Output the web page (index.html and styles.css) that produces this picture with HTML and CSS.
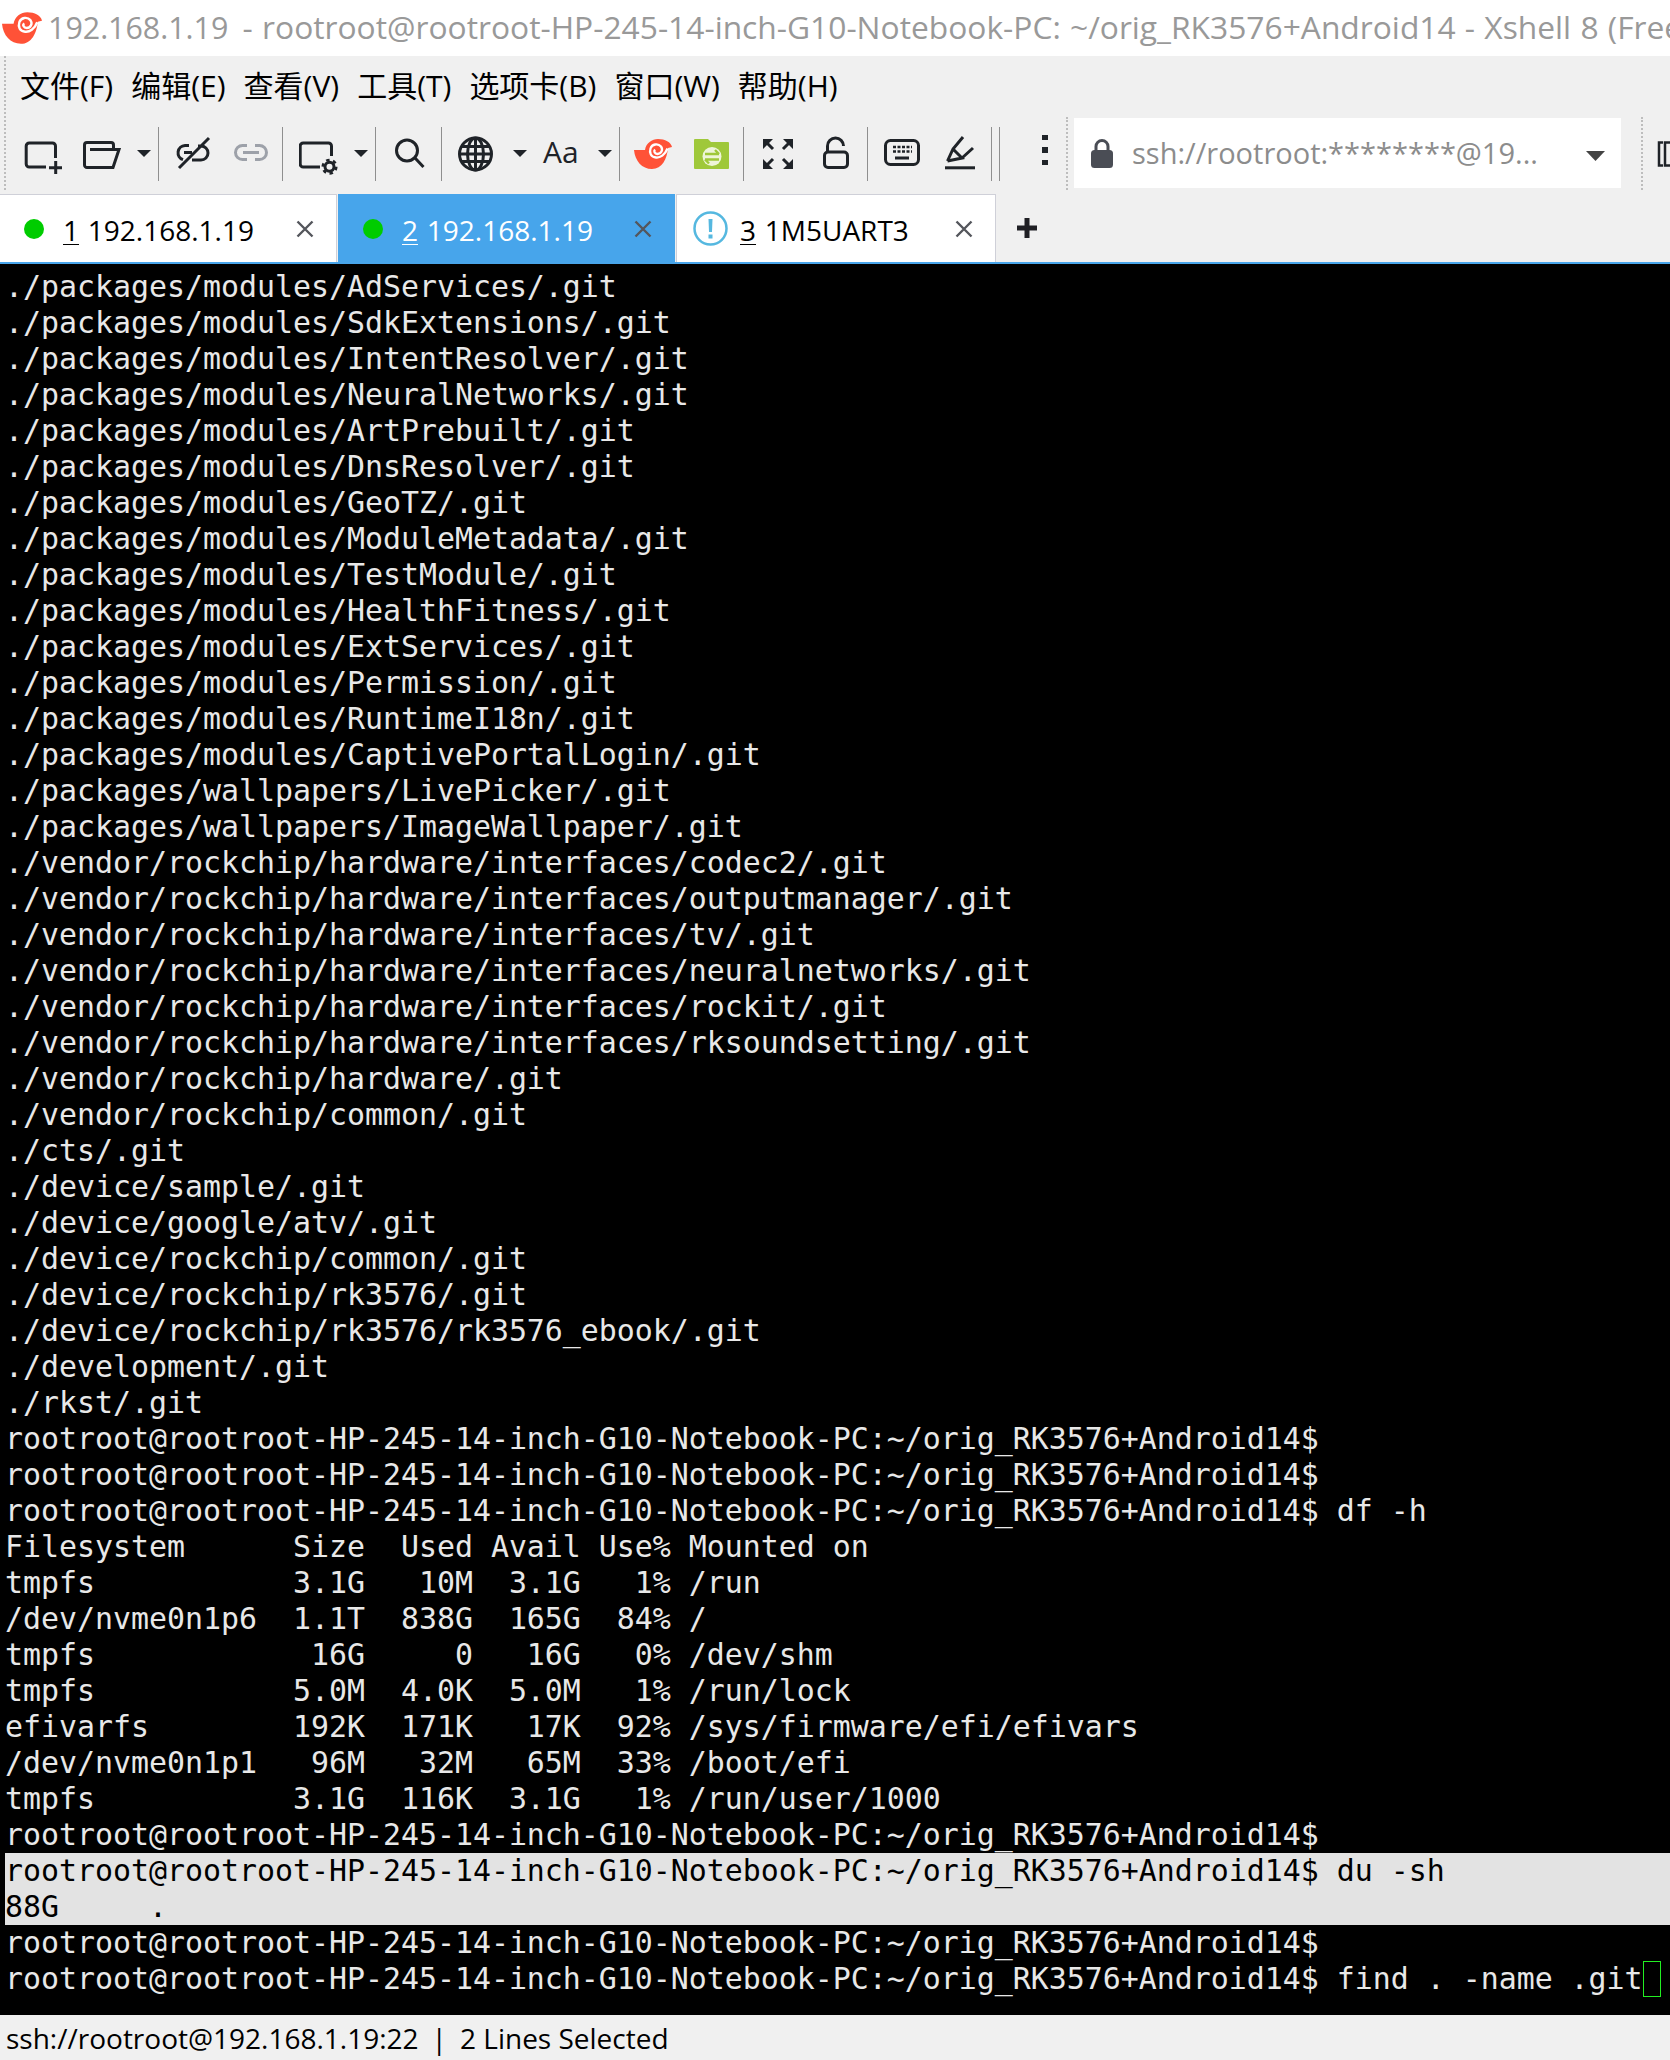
FILE: index.html
```html
<!DOCTYPE html>
<html lang="zh">
<head>
<meta charset="utf-8">
<title>Xshell 8</title>
<link rel="stylesheet" href="styles.css">
</head>
<body>
<svg class="defs" width="0" height="0">
  <symbol id="shell" viewBox="0 0 38 30">
    <path fill="#ff5237" d="M0 11H11C12 4 18 0 24 0 31 0 37 3 38 8L34 9C33 20 28 30 18 30 8 30 1 22 0 11Z"/>
    <path fill="none" stroke="#fff" stroke-width="2.300" d="M33.500 9.500C31 16 26 19 22 18.500 17 18 15 14 16.500 9.500 18 5 24 4 27 7.500 29.500 11 27 15 23.500 15 20.500 15 19.500 12 21 10.500"/>
  </symbol>
  <symbol id="caret" viewBox="0 0 14 54">
    <path fill="#1f2328" d="M0 23H14L7 30Z"/>
  </symbol>
  <symbol id="x" viewBox="0 0 18 18">
    <path fill="none" stroke="#54565c" stroke-width="2.400" d="M1.500 1.500 16.500 16.500M16.500 1.500 1.500 16.500"/>
  </symbol>
</svg>
<div class="window">
  <header class="titlebar">
    <svg class="title-logo"><use href="#shell"/></svg>
    <span class="title-text"><span class="title-ip">192.168.1.19</span> - rootroot@rootroot-HP-245-14-inch-G10-Notebook-PC: ~/orig_RK3576+Android14 - Xshell 8 (Free</span>
  </header>
  <div class="bars">
    <nav class="menubar">
      <span>文件(F)</span><span>编辑(E)</span><span>查看(V)</span><span>工具(T)</span><span>选项卡(B)</span><span>窗口(W)</span><span>帮助(H)</span>
    </nav>
    <div class="toolbar">
      <svg class="ico t-new" viewBox="0 0 39 54"><path d="M31.500 31V19a3 3 0 0 0-3-3H5.200a3 3 0 0 0-3 3v18a3 3 0 0 0 3 3H22M31.700 34v13M25 40.800h13"/></svg>
      <svg class="ico t-open" viewBox="0 0 39 54"><path d="M8 22.500h29l-6 18H5a2.500 2.500 0 0 1-2.500-2.500V18A2.500 2.500 0 0 1 5 15.500h24a2.500 2.500 0 0 1 2.500 2.500v3"/></svg>
      <svg class="caret c-open"><use href="#caret"/></svg>
      <i class="sep s-1"></i>
      <svg class="ico t-linkoff" viewBox="0 0 37 54"><path d="M14 18.500h-4a7.300 7.300 0 0 0-2 14.200M23 19h3a7 7 0 0 1 0 14H17M9 25.500h8M34 11 4 41"/></svg>
      <svg class="ico grey t-link" viewBox="0 0 36 54"><path d="M14 18.500H9.500a7 7 0 0 0 0 14H14M22 18.500h4.500a7 7 0 0 1 0 14H22M10 25.500h16"/></svg>
      <i class="sep s-2"></i>
      <svg class="ico t-gear" viewBox="0 0 40 54">
        <path d="M32.500 29V19a3 3 0 0 0-3-3H4.200a3 3 0 0 0-3 3v18a3 3 0 0 0 3 3H21"/>
        <circle cx="30.500" cy="39.700" r="4.500"/>
        <circle class="teeth" cx="30.500" cy="39.700" r="6.800"/>
      </svg>
      <svg class="caret c-gear"><use href="#caret"/></svg>
      <i class="sep s-3"></i>
      <svg class="ico t-search" viewBox="0 0 30 54"><circle cx="12" cy="23.500" r="10.500"/><path d="M20 31 28.500 40"/></svg>
      <i class="sep s-4"></i>
      <svg class="ico t-globe" viewBox="0 0 36 54">
        <circle cx="17.500" cy="27" r="16"/>
        <ellipse cx="17.500" cy="27" rx="8" ry="16"/>
        <path d="M17.500 11V43M1.500 27H33.500M4 19.500H31M4 34.500H31"/>
      </svg>
      <svg class="caret c-globe"><use href="#caret"/></svg>
      <span class="aa">Aa</span>
      <svg class="caret c-aa"><use href="#caret"/></svg>
      <i class="sep s-5"></i>
      <svg class="t-shell" viewBox="0 0 38 54"><use href="#shell" x="0" y="12" width="38" height="30"/></svg>
      <svg class="t-sftp" viewBox="0 0 35 54">
        <path fill="#9fc83a" d="M0 13a1 1 0 0 1 1-1h13l3 3h17a1 1 0 0 1 1 1v25a1 1 0 0 1-1 1H1a1 1 0 0 1-1-1Z"/>
        <circle cx="18" cy="29.500" r="9.500" fill="#eef5d8"/>
        <path fill="none" stroke="#9fc83a" stroke-width="2.400" d="M11 27H25M21 23l4 4M25 32.500H11M15 36.500l-4-4"/>
      </svg>
      <i class="sep s-6"></i>
      <svg class="ico t-expand" viewBox="0 0 30 54">
        <path class="solid" d="M0 12h10L0 22ZM30 12H20L30 22ZM0 42H10L0 32ZM30 42H20L30 32Z"/>
        <path d="M3 15 10 22M27 15 20 22M3 39 10 32M27 39 20 32"/>
      </svg>
      <svg class="ico t-unlock" viewBox="0 0 26 54"><rect x="1.500" y="25" width="23" height="15.500" rx="3.500"/><path d="M4.500 24V19a8 8 0 0 1 16 0"/></svg>
      <i class="sep s-7"></i>
      <svg class="ico t-keys" viewBox="0 0 36 54"><rect x="1.500" y="13.500" width="33" height="24" rx="5"/><path class="thin" d="M9 20H28M9 24.500H28"/><path d="M11 31H25"/></svg>
      <svg class="ico t-pen" viewBox="0 0 31 54"><path d="M0 40.800H30"/><path d="M2.500 34 8 22 18 10M8 22 17 31 2.500 34M17 31 28 21"/></svg>
      <i class="sep s-8"></i>
      <i class="sep s-9"></i>
      <svg class="t-dots" viewBox="0 0 6 54"><path fill="#1f2328" d="M0 8H6V13H0ZM0 20H6V26H0ZM0 33H6V38H0Z"/></svg>
      <i class="grip g-1"></i>
      <div class="address">
        <svg class="addr-lock" viewBox="0 0 24 30"><path fill="none" stroke="#4a4d55" stroke-width="3" d="M6 14V8.500a6 6 0 0 1 12 0V14"/><rect x="1" y="12" width="22" height="18" rx="3.500" fill="#4a4d55"/></svg>
        <span class="addr-text">ssh://rootroot:********@19...</span>
        <svg class="addr-caret" viewBox="0 0 19 10"><path fill="#444" d="M0 0H19L9.500 10Z"/></svg>
      </div>
      <i class="grip g-2"></i>
      <svg class="t-bracket" viewBox="0 0 13 54"><path fill="none" stroke="#1f2328" stroke-width="2.500" d="M6 15.500H2V38.500H6M13 15.500H8V38.500H13"/></svg>
    </div>
  </div>
  <div class="tabbar">
    <div class="tab t1">
      <i class="dot"></i>
      <span class="tab-label"><u>1</u> 192.168.1.19</span>
      <svg class="tab-x"><use href="#x"/></svg>
    </div>
    <div class="tab t2 active">
      <i class="dot"></i>
      <span class="tab-label"><u>2</u> 192.168.1.19</span>
      <svg class="tab-x"><use href="#x"/></svg>
    </div>
    <div class="tab t3">
      <svg class="alert" viewBox="0 0 35 35"><circle cx="17.500" cy="17.500" r="16" fill="none" stroke="#55b8e0" stroke-width="2.500"/><path fill="#55b8e0" d="M15.500 8H19.500L19 21H16ZM15.500 23.500H19.500V27.500H15.500Z"/></svg>
      <span class="tab-label"><u>3</u> 1M5UART3</span>
      <svg class="tab-x"><use href="#x"/></svg>
    </div>
    <svg class="tab-add" viewBox="0 0 20 20"><path fill="none" stroke="#1f1f24" stroke-width="5" d="M10 0V20M0 10H20"/></svg>
  </div>
  <main class="terminal"><pre class="screen">./packages/modules/AdServices/.git
./packages/modules/SdkExtensions/.git
./packages/modules/IntentResolver/.git
./packages/modules/NeuralNetworks/.git
./packages/modules/ArtPrebuilt/.git
./packages/modules/DnsResolver/.git
./packages/modules/GeoTZ/.git
./packages/modules/ModuleMetadata/.git
./packages/modules/TestModule/.git
./packages/modules/HealthFitness/.git
./packages/modules/ExtServices/.git
./packages/modules/Permission/.git
./packages/modules/RuntimeI18n/.git
./packages/modules/CaptivePortalLogin/.git
./packages/wallpapers/LivePicker/.git
./packages/wallpapers/ImageWallpaper/.git
./vendor/rockchip/hardware/interfaces/codec2/.git
./vendor/rockchip/hardware/interfaces/outputmanager/.git
./vendor/rockchip/hardware/interfaces/tv/.git
./vendor/rockchip/hardware/interfaces/neuralnetworks/.git
./vendor/rockchip/hardware/interfaces/rockit/.git
./vendor/rockchip/hardware/interfaces/rksoundsetting/.git
./vendor/rockchip/hardware/.git
./vendor/rockchip/common/.git
./cts/.git
./device/sample/.git
./device/google/atv/.git
./device/rockchip/common/.git
./device/rockchip/rk3576/.git
./device/rockchip/rk3576/rk3576_ebook/.git
./development/.git
./rkst/.git
rootroot@rootroot-HP-245-14-inch-G10-Notebook-PC:~/orig_RK3576+Android14$
rootroot@rootroot-HP-245-14-inch-G10-Notebook-PC:~/orig_RK3576+Android14$
rootroot@rootroot-HP-245-14-inch-G10-Notebook-PC:~/orig_RK3576+Android14$ df -h
Filesystem      Size  Used Avail Use% Mounted on
tmpfs           3.1G   10M  3.1G   1% /run
/dev/nvme0n1p6  1.1T  838G  165G  84% /
tmpfs            16G     0   16G   0% /dev/shm
tmpfs           5.0M  4.0K  5.0M   1% /run/lock
efivarfs        192K  171K   17K  92% /sys/firmware/efi/efivars
/dev/nvme0n1p1   96M   32M   65M  33% /boot/efi
tmpfs           3.1G  116K  3.1G   1% /run/user/1000
rootroot@rootroot-HP-245-14-inch-G10-Notebook-PC:~/orig_RK3576+Android14$
<span class="selected">rootroot@rootroot-HP-245-14-inch-G10-Notebook-PC:~/orig_RK3576+Android14$ du -sh
88G     .
</span>rootroot@rootroot-HP-245-14-inch-G10-Notebook-PC:~/orig_RK3576+Android14$
rootroot@rootroot-HP-245-14-inch-G10-Notebook-PC:~/orig_RK3576+Android14$ find . -name .git<span class="cursor"> </span></pre></main>
  <footer class="statusbar"><span>ssh://rootroot@192.168.1.19:22</span><span>|</span><span>2 Lines Selected</span></footer>
</div>
</body>
</html>
```
FILE: styles.css
```css
* { box-sizing: border-box; }
html, body { margin: 0; padding: 0; background: #000; }
.defs { position: absolute; }
.window {
  width: 1670px; height: 2060px; overflow: hidden;
  display: flex; flex-direction: column;
  font-family: "Open Sans", "Noto Sans CJK SC", sans-serif;
  background: #f0f0f0;
}
svg { display: block; flex: none; }

/* title */
.titlebar { height: 56px; background: #fff; display: flex; align-items: center; padding-left: 2px; white-space: nowrap; overflow: hidden; }
.title-logo { width: 40px; height: 32px; margin-top: -1px; flex: none; }
.title-text { margin-left: 6px; font-size: 31.750px; color: #999; margin-top: -4px; word-spacing: 1px; }
.title-ip { font-size: 30.400px; margin-right: 5px; }

/* menu + toolbar */
.bars { height: 134px; margin-left: 4px; border-left: 2px dotted #bdbdbd; }
.menubar { height: 56px; display: flex; align-items: center; gap: 18px; padding-left: 14px; font-size: 30px; color: #000; }
.menubar span { line-height: 56px; margin-top: 3px; }
.toolbar { height: 78px; display: flex; align-items: flex-start; }
.toolbar > svg, .toolbar > .sep, .aa { margin-top: 15px; height: 54px; }

.ico { fill: none; stroke: #1f2328; stroke-width: 3; stroke-linecap: butt; }
.ico.grey { stroke: #9da1a9; }
.ico .solid { fill: #1f2328; stroke: none; }
.ico .thin { stroke-width: 2.500; stroke-dasharray: 3 1.500; }
.ico .teeth { stroke-width: 2.500; stroke-dasharray: 3.500 3.600; }
.sep { display: block; flex: none; width: 1px; background: #8f8f8f; }
.caret { width: 14px; }

.t-new { width: 39px; margin-left: 18px; }
.t-open { width: 39px; margin-left: 19px; }
.c-open { margin-left: 16px; }
.s-1 { margin-left: 7px; }
.t-linkoff { width: 37px; margin-left: 16px; }
.t-link { width: 36px; margin-left: 21px; }
.s-2 { margin-left: 13px; }
.t-gear { width: 40px; margin-left: 16px; }
.c-gear { margin-left: 15px; }
.s-3 { margin-left: 7px; }
.t-search { width: 30px; margin-left: 19px; }
.s-4 { margin-left: 16px; }
.t-globe { width: 36px; margin-left: 16px; }
.c-globe { margin-left: 19px; }
.aa { width: 36px; margin-left: 16px; font-size: 30px; line-height: 50px; color: #1f2328; flex: none; }
.c-aa { margin-left: 19px; }
.s-5 { margin-left: 7px; }
.t-shell { width: 38px; margin-left: 14px; }
.t-sftp { width: 35px; margin-left: 22px; }
.s-6 { margin-left: 14px; }
.t-expand { width: 30px; margin-left: 19px; }
.t-unlock { width: 26px; margin-left: 30px; }
.s-7 { margin-left: 18px; }
.t-keys { width: 36px; margin-left: 16px; }
.t-pen { width: 31px; margin-left: 25px; }
.s-8 { margin-left: 15px; }
.s-9 { margin-left: 7px; }
.t-dots { width: 6px; margin-left: 42px; }
.grip { display: block; flex: none; height: 73px; margin-top: 5px; border-left: 2px dotted #bdbdbd; }
.g-1 { margin-left: 18px; }
.g-2 { margin-left: 20px; }
.t-bracket { width: 13px; margin-left: 14px; }

.address { width: 547px; height: 70px; margin-top: 6px; margin-left: 6px; background: #fff; display: flex; align-items: center; padding-left: 16px; flex: none; }
.addr-lock { width: 24px; height: 30px; }
.addr-text { margin-left: 18px; font-size: 29px; color: #8c8c8c; white-space: nowrap; margin-top: -1px; }
.addr-caret { width: 19px; height: 10px; margin-left: auto; margin-right: 16px; margin-top: 6px; }

/* tabs */
.tabbar { height: 74px; padding-top: 4px; display: flex; align-items: stretch; gap: 1px; border-bottom: 2px solid #48a5ea; }
.tab { display: flex; align-items: center; background: #fff; border: 1px solid #cfd0d8; border-bottom: 0; font-size: 28px; color: #000; padding-right: 22px; flex: none; }
.t1 { width: 337px; padding-left: 24px; border-left: 0; }
.t2 { width: 337px; padding-left: 24px; }
.t3 { width: 320px; padding-left: 16px; }
.tab.active { background: #47a5eb; border-color: #47a5eb; color: #fff; }
.dot { display: block; flex: none; width: 20px; height: 20px; border-radius: 50%; background: #00cc00; }
.tab-label { margin-left: 19px; white-space: nowrap; margin-top: 3px; word-spacing: 1.500px; }
.tab-label u { text-underline-offset: 3px; text-decoration-thickness: 1px; }
.alert { width: 35px; height: 35px; }
.t3 .tab-label { margin-left: 12px; }
.tab-x { width: 18px; height: 18px; margin-left: auto; }
.tab-add { width: 20px; height: 20px; margin: 24px 0 0 20px; }

/* terminal */
.terminal { height: 1751px; background: #000; padding-top: 5px; overflow: hidden; }
.screen { margin: 0; padding-left: 5px; font-family: "DejaVu Sans Mono", monospace; font-size: 29.900px; line-height: 36px; color: #e8e8e8; }
.selected { display: block; background: #e3e3e3; color: #000; height: 72px; }
.cursor { display: inline-block; width: 18px; height: 36px; border: 1px solid #22ee22; vertical-align: top; }

/* status */
.statusbar { flex: 1; background: #f0f0f0; display: flex; align-items: center; gap: 13px; padding-left: 6px; font-size: 28px; color: #000; }
```
